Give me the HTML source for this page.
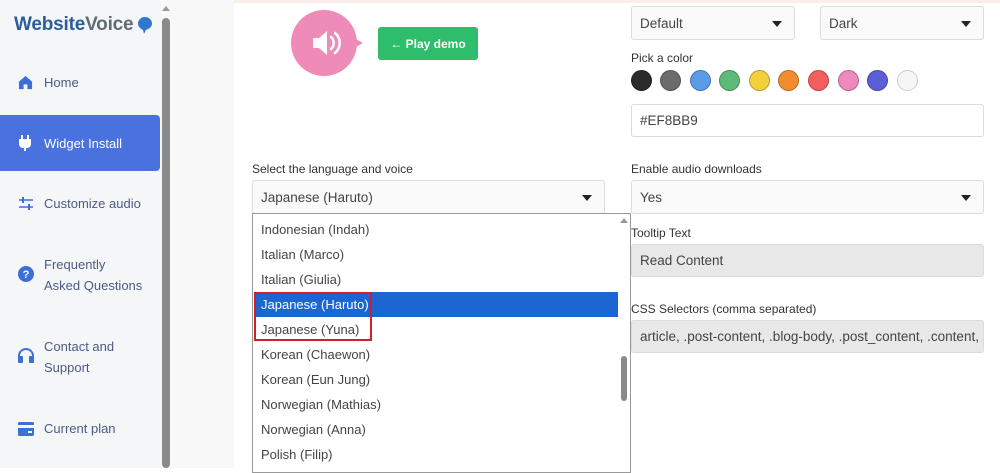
<!DOCTYPE html>
<html><head><style>
*{margin:0;padding:0;box-sizing:border-box}
body{width:1000px;height:468px;overflow:hidden;background:#fff;font-family:"Liberation Sans",sans-serif;position:relative;color:#333}
.a{position:absolute}
.side{left:0;top:0;width:161px;height:468px;background:#f5f6f8}
.gap{left:161px;top:0;width:73px;height:468px;background:#f8f8f8}
.item{position:absolute;left:0;width:160px;font-size:13px;color:#4b5b85;line-height:21px}
.item .t{position:absolute;left:44px}
.item svg{position:absolute;left:18px}
.lbl{position:absolute;font-size:12px;color:#333}
.box{position:absolute;border:1px solid #dcdcdc;border-radius:3px;background:#fafafa;font-size:13.5px;color:#444;padding-left:8px;display:flex;align-items:center}
.caret{position:absolute;right:12px;top:50%;margin-top:-2px;border-left:5px solid transparent;border-right:5px solid transparent;border-top:6px solid #222}
.dot{position:absolute;top:70px;width:21px;height:21px;border-radius:50%;border:1.5px solid rgba(0,0,0,.25)}
.opt{position:absolute;left:8px;font-size:13px;color:#444}
</style></head><body>
<div class="a" style="left:0;top:0;width:1000px;height:3px;background:#fbeeea"></div>
<div class="a side"></div>
<div class="a gap"></div>
<div class="a" style="left:162px;top:6px;width:0;height:0;border-left:4px solid transparent;border-right:4px solid transparent;border-bottom:5px solid #999"></div>
<div class="a" style="left:162px;top:18px;width:8px;height:450px;background:#8a8a8a;border-radius:4px"></div>
<div class="a" style="left:14px;top:14px;font-size:19px;font-weight:bold;letter-spacing:-0.2px"><span style="color:#2b5c9c">Website</span><span style="color:#616b78">Voice</span></div>
<svg class="a" style="left:138px;top:17px" width="14" height="17" viewBox="0 0 14 17"><path d="M7 0C3 0 0 3 0 6.5 0 10 3 12 5 13L6 17 8 12.8C11 12 14 10 14 6.5 14 3 11 0 7 0Z" fill="#2f78d0"/></svg>

<div class="item" style="top:72px"><svg width="15" height="15" viewBox="0 0 16 16" style="top:3px"><path d="M8 1 1 7v8h5v-5h4v5h5V7z" fill="#3e6fd6"/></svg><span class="t">Home</span></div>
<div class="a" style="left:0;top:115px;width:160px;height:56px;background:#4a72de;border-radius:0 4px 4px 0"></div>
<div class="item" style="top:133px;color:#fff"><svg width="14" height="16" viewBox="0 0 14 16" style="top:2px"><path d="M3 0h2v4H3zM9 0h2v4H9zM1 4h12v5a4 4 0 0 1-4 4H8v3H6v-3H5a4 4 0 0 1-4-4z" fill="#fff"/></svg><span class="t">Widget Install</span></div>
<div class="item" style="top:193px"><svg width="16" height="14" viewBox="0 0 16 14" style="top:4px"><path d="M1 3h14M1 10h14" stroke="#3e6fd6" stroke-width="1.6"/><rect x="4" y="0" width="2" height="6" fill="#3e6fd6"/><rect x="10" y="7" width="2" height="6" fill="#3e6fd6"/></svg><span class="t">Customize audio</span></div>
<div class="item" style="top:254px"><svg width="16" height="16" viewBox="0 0 16 16" style="top:12px"><circle cx="8" cy="8" r="8" fill="#3e6fd6"/><text x="8" y="12" font-size="11" font-weight="bold" fill="#fff" text-anchor="middle" font-family="Liberation Sans">?</text></svg><span class="t">Frequently<br>Asked Questions</span></div>
<div class="item" style="top:336px"><svg width="16" height="15" viewBox="0 0 16 15" style="top:12px"><path d="M1 13V8a7 7 0 0 1 14 0v5" fill="none" stroke="#3e6fd6" stroke-width="2"/><rect x="0" y="8" width="5" height="7" rx="1" fill="#3e6fd6"/><rect x="11" y="8" width="5" height="7" rx="1" fill="#3e6fd6"/></svg><span class="t">Contact and<br>Support</span></div>
<div class="item" style="top:418px"><svg width="16" height="14" viewBox="0 0 16 14" style="top:4px"><rect x="0" y="0" width="16" height="14" rx="1.5" fill="#3e6fd6"/><rect x="0" y="3" width="16" height="3" fill="#f5f6f8"/><rect x="10" y="9" width="4" height="2" fill="#f5f6f8"/></svg><span class="t">Current plan</span></div>

<!-- speaker -->
<svg class="a" style="left:286px;top:9px" width="90" height="70" viewBox="0 0 90 70"><circle cx="38" cy="34" r="33" fill="#ef8bb9"/><path d="M68 29 77 34 68 39z" fill="#ef8bb9"/><path d="M27 29h6l8-7v24l-8-7h-6z" fill="#fff"/><path d="M45 28a8 8 0 0 1 0 12M49 24a13 13 0 0 1 0 20" stroke="#fff" stroke-width="2.5" fill="none" stroke-linecap="round"/></svg>
<div class="a" style="left:378px;top:27px;width:100px;height:33px;background:#2ebd6b;border-radius:3px;color:#fff;font-weight:bold;font-size:12px;display:flex;align-items:center;justify-content:center">&larr; Play demo</div>

<!-- right column -->
<div class="box" style="left:631px;top:6px;width:164px;height:34px">Default<span class="caret"></span></div>
<div class="box" style="left:820px;top:6px;width:164px;height:34px">Dark<span class="caret"></span></div>
<div class="lbl" style="left:631px;top:51px">Pick a color</div>
<div class="dot" style="left:631px;background:#2b2b2b"></div>
<div class="dot" style="left:660px;background:#6c6c6c"></div>
<div class="dot" style="left:690px;background:#5b9be6"></div>
<div class="dot" style="left:719px;background:#5dba78"></div>
<div class="dot" style="left:749px;background:#f3d13b"></div>
<div class="dot" style="left:778px;background:#f38b2f"></div>
<div class="dot" style="left:808px;background:#f25f5f"></div>
<div class="dot" style="left:838px;background:#ee89bd"></div>
<div class="dot" style="left:867px;background:#5b5fd6"></div>
<div class="dot" style="left:897px;background:#f6f6f6;border-color:#ccc"></div>
<div class="box" style="left:631px;top:104px;width:353px;height:33px;background:#fff">#EF8BB9</div>
<div class="lbl" style="left:631px;top:162px">Enable audio downloads</div>
<div class="box" style="left:631px;top:180px;width:353px;height:34px">Yes<span class="caret"></span></div>
<div class="lbl" style="left:631px;top:226px">Tooltip Text</div>
<div class="box" style="left:631px;top:244px;width:353px;height:33px;background:#e8e8e8">Read Content</div>
<div class="lbl" style="left:631px;top:302px">CSS Selectors (comma separated)</div>
<div class="box" style="left:631px;top:320px;width:353px;height:33px;background:#e8e8e8;overflow:hidden;white-space:nowrap">article, .post-content, .blog-body, .post_content, .content, .se</div>

<!-- language -->
<div class="lbl" style="left:252px;top:162px">Select the language and voice</div>
<div class="box" style="left:252px;top:180px;width:353px;height:34px">Japanese (Haruto)<span class="caret"></span></div>
<div class="a" style="left:252px;top:213px;width:379px;height:260px;background:#fff;border:1px solid #999">
 <div class="a" style="left:1px;top:78px;width:364px;height:25px;background:#1c66d2"></div>
 <div class="opt" style="top:8px">Indonesian (Indah)</div>
 <div class="opt" style="top:33px">Italian (Marco)</div>
 <div class="opt" style="top:58px">Italian (Giulia)</div>
 <div class="opt" style="top:83px;color:#fff">Japanese (Haruto)</div>
 <div class="opt" style="top:108px">Japanese (Yuna)</div>
 <div class="opt" style="top:133px">Korean (Chaewon)</div>
 <div class="opt" style="top:158px">Korean (Eun Jung)</div>
 <div class="opt" style="top:183px">Norwegian (Mathias)</div>
 <div class="opt" style="top:208px">Norwegian (Anna)</div>
 <div class="opt" style="top:233px">Polish (Filip)</div>
 <div class="a" style="left:1px;top:78px;width:118px;height:49px;border:2px solid #d0202a"></div>
 <div class="a" style="left:367px;top:4px;border-left:4px solid transparent;border-right:4px solid transparent;border-bottom:5px solid #999"></div>
 <div class="a" style="left:368px;top:142px;width:6px;height:45px;background:#8a8a8a;border-radius:3px"></div>
</div>
</body></html>
